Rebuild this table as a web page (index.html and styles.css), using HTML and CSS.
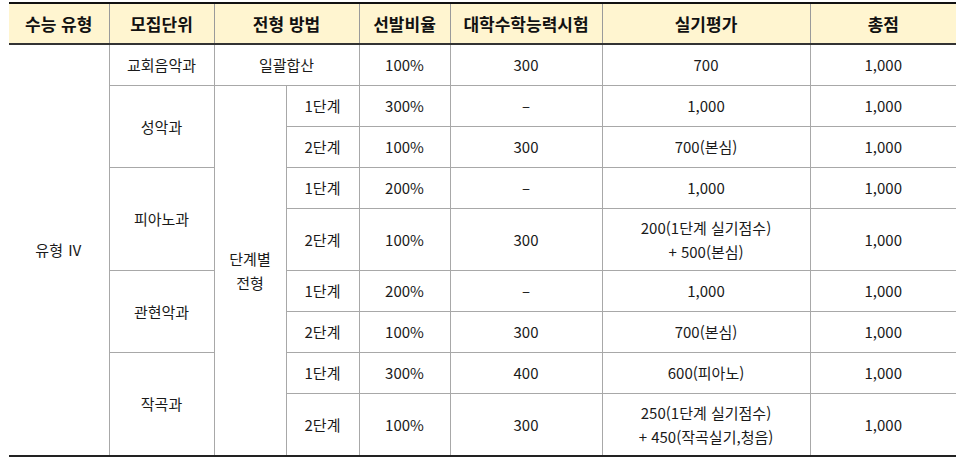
FILE: index.html
```html
<!DOCTYPE html>
<html lang="ko">
<head>
<meta charset="utf-8">
<link rel="stylesheet" href="styles.css">
</head>
<body>
<table class="admit">
  <colgroup>
    <col class="c1"><col class="c2"><col class="c3"><col class="c4"><col class="c5"><col class="c6"><col class="c7"><col class="c8">
  </colgroup>
  <thead>
    <tr class="head">
      <th class="first">수능 유형</th>
      <th>모집단위</th>
      <th colspan="2">전형 방법</th>
      <th>선발비율</th>
      <th>대학수학능력시험</th>
      <th>실기평가</th>
      <th class="last">총점</th>
    </tr>
  </thead>
  <tbody>
    <tr class="r">
      <td class="first lastrow" rowspan="9">유형 Ⅳ</td>
      <td>교회음악과</td>
      <td colspan="2">일괄합산</td>
      <td>100%</td>
      <td>300</td>
      <td>700</td>
      <td class="last">1,000</td>
    </tr>
    <tr class="r">
      <td rowspan="2">성악과</td>
      <td rowspan="8" class="lastrow stack">단계별<br>전형</td>
      <td>1단계</td>
      <td>300%</td>
      <td>–</td>
      <td>1,000</td>
      <td class="last">1,000</td>
    </tr>
    <tr class="r">
      <td>2단계</td>
      <td>100%</td>
      <td>300</td>
      <td>700(본심)</td>
      <td class="last">1,000</td>
    </tr>
    <tr class="r">
      <td rowspan="2">피아노과</td>
      <td>1단계</td>
      <td>200%</td>
      <td>–</td>
      <td>1,000</td>
      <td class="last">1,000</td>
    </tr>
    <tr class="tall">
      <td>2단계</td>
      <td>100%</td>
      <td>300</td>
      <td>200(1단계 실기점수)<br>+ 500(본심)</td>
      <td class="last">1,000</td>
    </tr>
    <tr class="r">
      <td rowspan="2">관현악과</td>
      <td>1단계</td>
      <td>200%</td>
      <td>–</td>
      <td>1,000</td>
      <td class="last">1,000</td>
    </tr>
    <tr class="r">
      <td>2단계</td>
      <td>100%</td>
      <td>300</td>
      <td>700(본심)</td>
      <td class="last">1,000</td>
    </tr>
    <tr class="r">
      <td rowspan="2" class="lastrow">작곡과</td>
      <td>1단계</td>
      <td>300%</td>
      <td>400</td>
      <td>600(피아노)</td>
      <td class="last">1,000</td>
    </tr>
    <tr class="tall end">
      <td>2단계</td>
      <td>100%</td>
      <td>300</td>
      <td>250(1단계 실기점수)<br>+ 450(작곡실기,청음)</td>
      <td class="last">1,000</td>
    </tr>
  </tbody>
</table>
</body>
</html>
```

FILE: styles.css
```css
html, body {
  margin: 0;
  padding: 0;
  background: #ffffff;
}

body {
  padding: 2px 0 0 9px;
  font-family: "Noto Sans CJK KR", "Noto Sans", sans-serif;
  color: #1a1a1a;
}

.admit {
  width: 947px;
  table-layout: fixed;
  border-collapse: collapse;
  border-top: 2px solid #111111;
  border-bottom: 2px solid #222222;
}

.c1 { width: 100px; }
.c2 { width: 105px; }
.c3 { width: 72px; }
.c4 { width: 73px; }
.c5 { width: 91px; }
.c6 { width: 152px; }
.c7 { width: 208px; }
.c8 { width: 146px; }

.admit th,
.admit td {
  padding: 0;
  text-align: center;
  vertical-align: middle;
  border: 1px solid #a8a8a8;
}

.admit th {
  background: #fff5d0;
  font-size: 17px;
  font-weight: 700;
  color: #111111;
  border-left-color: #9a9a9a;
  border-right-color: #9a9a9a;
  border-bottom: 2px solid #333333;
  height: 39px;
  white-space: nowrap;
}

.admit td {
  font-size: 15px;
  line-height: 24px;
}

.admit .first { border-left: none; }
.admit .last { border-right: none; }

.admit .r td { height: 40px; }
.admit .tall td { height: 61px; }

.admit .end td,
.admit td.lastrow {
  border-bottom: 2px solid #222222;
}

.stack {
  line-height: 26px;
}
```
